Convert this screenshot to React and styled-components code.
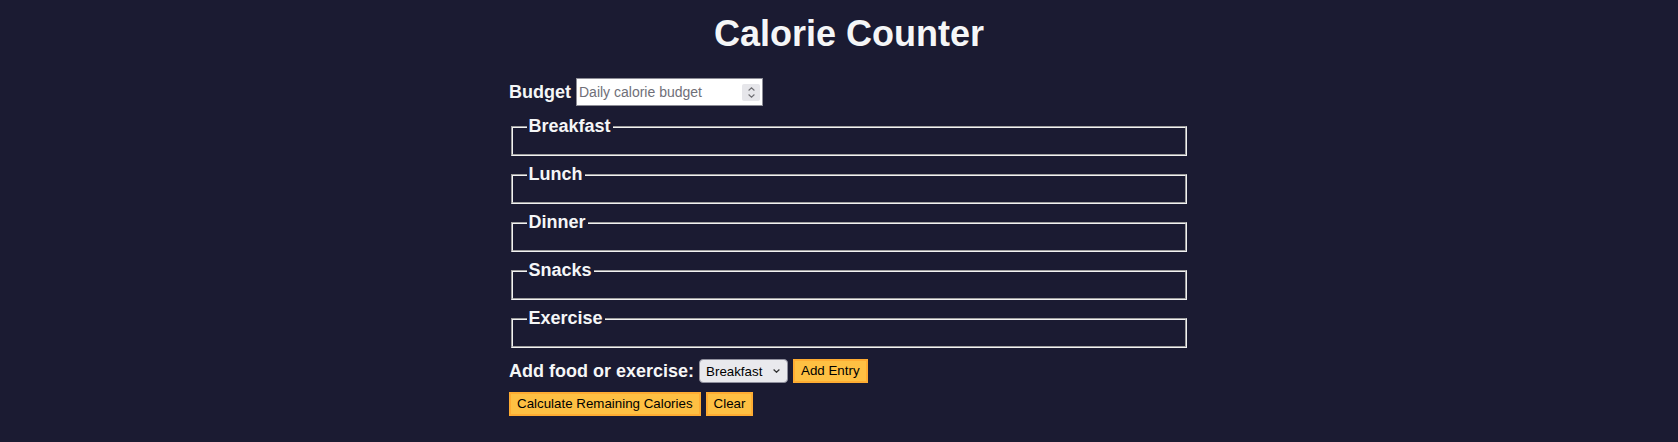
import styled, { createGlobalStyle } from "styled-components";

const GlobalStyle = createGlobalStyle`
  body {
    margin: 0;
    padding: 0 0 0 20px;
    background-color: #1b1b32;
    color: #f5f6f7;
    font-family: "Liberation Sans", Arial, sans-serif;
    font-size: 18px;
  }
`;

const Main = styled.main`
  width: 680px;
  margin: 0 auto;
`;

const Title = styled.h1`
  margin: 13px 0 23px;
  font-size: 36px;
  font-weight: bold;
  text-align: center;
`;

const Form = styled.form`
  display: flex;
  flex-direction: column;
`;

const Row = styled.div`
  display: flex;
  align-items: center;
  gap: 5px;
  margin-top: ${(p) => p.$top || 0}px;
`;

const Label = styled.label`
  font-weight: bold;
`;

const BudgetBox = styled.div`
  display: flex;
  align-items: center;
  box-sizing: border-box;
  width: 187px;
  height: 28px;
  padding: 0 2px;
  background: #ffffff;
  border: 1px solid #8d8d96;
`;

const BudgetInput = styled.input`
  flex: 1;
  min-width: 0;
  padding: 0;
  border: none;
  outline: none;
  background: transparent;
  color: #000000;
  font: 14px "Liberation Sans", Arial, sans-serif;
  -moz-appearance: textfield;
  &::placeholder {
    color: #6f6f78;
  }
  &::-webkit-inner-spin-button,
  &::-webkit-outer-spin-button {
    -webkit-appearance: none;
    margin: 0;
  }
`;

const Spinner = styled.span`
  display: flex;
  flex-direction: column;
  align-items: center;
  justify-content: center;
  gap: 3px;
  width: 18px;
  height: 17px;
  background: #e6e6ea;
  border-radius: 2px;
`;

const Meals = styled.div`
  display: flex;
  flex-direction: column;
  margin-top: 10px;
`;

const Meal = styled.fieldset`
  min-width: 0;
  margin: 0 2px 8px;
  padding: 6px 13.5px 11px;
  border: 2px groove #f2f2f2;
`;

const MealLegend = styled.legend`
  padding: 0 2px;
  font-weight: bold;
`;

const SelectWrap = styled.div`
  position: relative;
  display: flex;
`;

const Select = styled.select`
  appearance: none;
  box-sizing: border-box;
  width: 89px;
  height: 24px;
  padding: 0 18px 0 6px;
  background: #e9e9ed;
  color: #000000;
  border: 1px solid #8f8f9d;
  border-radius: 4px;
  font: 13.33px "Liberation Sans", Arial, sans-serif;
`;

const Chevron = styled.svg`
  position: absolute;
  right: 8px;
  top: 50%;
  transform: translateY(-50%);
  pointer-events: none;
`;

const Button = styled.button`
  padding: 2px 6px;
  background: #fec043;
  color: #000000;
  border: 2px solid #feac32;
  border-radius: 0;
  font: 13.33px "Liberation Sans", Arial, sans-serif;
  line-height: 16px;
  cursor: pointer;
`;

const meals = ["Breakfast", "Lunch", "Dinner", "Snacks", "Exercise"];

export default function App() {
  return (
    <>
      <GlobalStyle />
      <Main>
        <Title>Calorie Counter</Title>
        <Form onSubmit={(e) => e.preventDefault()}>
          <Row>
            <Label htmlFor="budget">Budget</Label>
            <BudgetBox>
              <BudgetInput type="number" min="0" id="budget" placeholder="Daily calorie budget" />
              <Spinner>
                <svg width="7" height="4" viewBox="0 0 7 4">
                  <path d="M0.6 3.5 L3.5 0.8 L6.4 3.5" fill="none" stroke="#6e6e73" strokeWidth="1.1" />
                </svg>
                <svg width="7" height="4" viewBox="0 0 7 4">
                  <path d="M0.6 0.5 L3.5 3.2 L6.4 0.5" fill="none" stroke="#6e6e73" strokeWidth="1.1" />
                </svg>
              </Spinner>
            </BudgetBox>
          </Row>
          <Meals>
            {meals.map((m) => (
              <Meal key={m} id={m.toLowerCase()}>
                <MealLegend>{m}</MealLegend>
                <div />
              </Meal>
            ))}
          </Meals>
          <Row $top={3}>
            <Label htmlFor="entry-dropdown">Add food or exercise:</Label>
            <SelectWrap>
              <Select id="entry-dropdown" defaultValue="breakfast">
                {meals.map((m) => (
                  <option key={m} value={m.toLowerCase()}>{m}</option>
                ))}
              </Select>
              <Chevron width="7" height="4" viewBox="0 0 7 4">
                <path d="M0.6 0.5 L3.5 3.3 L6.4 0.5" fill="none" stroke="#333333" strokeWidth="1.2" />
              </Chevron>
            </SelectWrap>
            <Button type="button">Add Entry</Button>
          </Row>
          <Row $top={9}>
            <Button type="submit">Calculate Remaining Calories</Button>
            <Button type="button">Clear</Button>
          </Row>
        </Form>
      </Main>
    </>
  );
}
